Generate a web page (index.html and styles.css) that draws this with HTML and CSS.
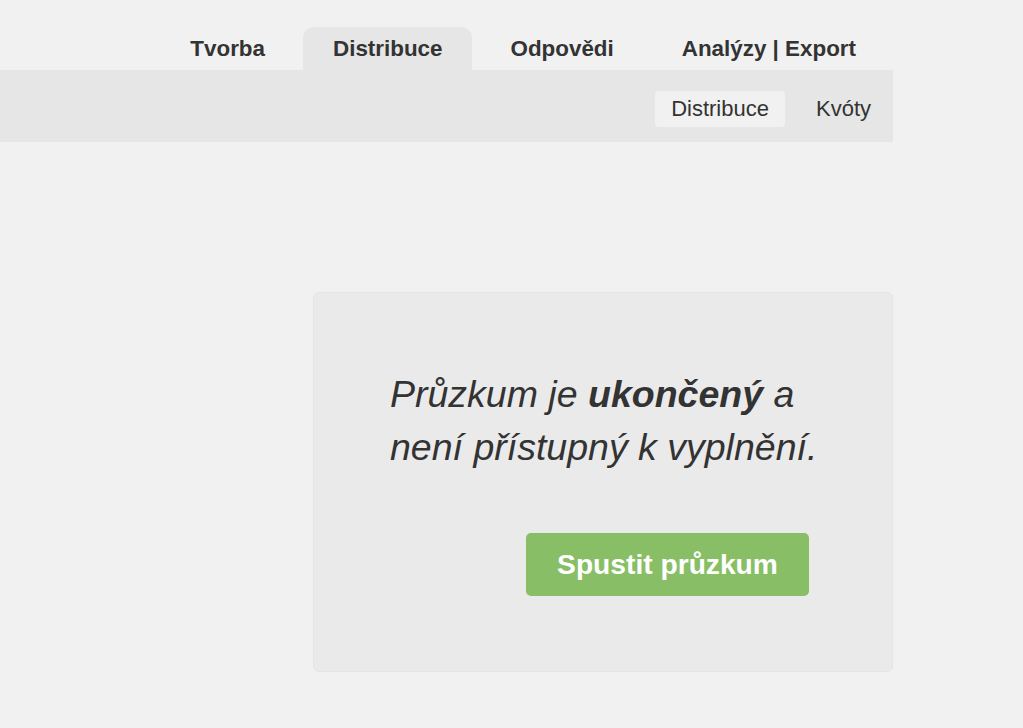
FILE: index.html
```html
<!DOCTYPE html>
<html lang="cs">
<head>
<meta charset="utf-8">
<link rel="stylesheet" href="styles.css">
</head>
<body>
<div class="page">
  <nav class="tabs">
    <span class="tab">Tvorba</span>
    <span class="tab active">Distribuce</span>
    <span class="tab">Odpovědi</span>
    <span class="tab">Analýzy | Export</span>
  </nav>
  <div class="subbar">
    <span class="subitem active">Distribuce</span>
    <span class="subitem">Kvóty</span>
  </div>
  <main class="main">
    <section class="card">
      <p class="message">Průzkum je <b>ukončený</b> a<br>není přístupný k vyplnění.</p>
      <div class="actions">
        <button class="btn">Spustit průzkum</button>
      </div>
    </section>
  </main>
</div>
</body>
</html>
```
FILE: styles.css
```css
html, body {
  margin: 0;
  padding: 0;
  background: #f1f1f1;
  font-family: "Liberation Sans", Arial, sans-serif;
  color: #333333;
}
.page {
  width: 893px;
}
.tabs {
  display: flex;
  justify-content: flex-end;
  gap: 8px;
  padding-top: 27px;
  padding-right: 7px;
}
.tab {
  display: block;
  height: 43px;
  line-height: 43px;
  padding: 0 30px;
  font-size: 22.4px;
  font-weight: bold;
  border-radius: 11px 11px 0 0;
}
.tab.active {
  background: #e6e6e6;
}
.subbar {
  height: 72px;
  background: #e6e6e6;
  display: flex;
  justify-content: flex-end;
  align-items: center;
  gap: 15px;
  padding-right: 6px;
  box-sizing: border-box;
  padding-top: 6px;
}
.subitem {
  display: block;
  height: 36px;
  line-height: 36px;
  padding: 0 16px;
  font-size: 22px;
  border-radius: 4px;
}
.subitem.active {
  background: #f1f1f1;
}
.main {
  padding-top: 150px;
  padding-left: 313px;
}
.card {
  box-sizing: border-box;
  width: 580px;
  height: 380px;
  background: #eaeaea;
  border: 1px solid #e5e5e5;
  border-radius: 6px;
  padding: 75px 0 0 76px;
}
.message {
  margin: 0;
  font-size: 37.5px;
  line-height: 53px;
  font-style: italic;
}
.message b {
  font-weight: bold;
}
.actions {
  padding-left: 136px;
  padding-top: 59px;
}
.btn {
  display: block;
  width: 283px;
  height: 63px;
  background: #88bf66;
  border: none;
  border-radius: 5px;
  color: #ffffff;
  font-family: "Liberation Sans", Arial, sans-serif;
  font-size: 28.2px;
  font-weight: bold;
  padding: 0;
}
```
